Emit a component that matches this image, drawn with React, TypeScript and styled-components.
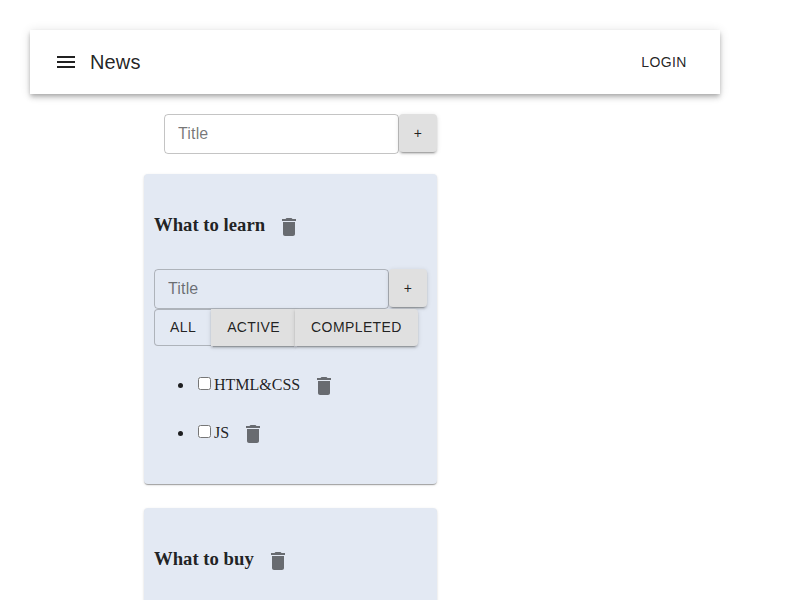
import React from "react";
import styled, { createGlobalStyle } from "styled-components";

const GlobalStyle = createGlobalStyle`
  *, *::before, *::after { box-sizing: border-box; }
  html { -webkit-font-smoothing: antialiased; }
  body {
    margin: 0;
    background: #fff;
    color: rgba(0, 0, 0, 0.87);
    font-family: "Liberation Serif", serif;
    font-size: 16px;
    overflow: hidden;
  }
`;

const Page = styled.div`
  height: 600px;
  padding: 30px 30px 0;
  overflow: hidden;
`;

const AppBar = styled.header`
  display: flex;
  align-items: center;
  width: 690px;
  height: 64px;
  padding: 0 24px;
  background: #fff;
  box-shadow: 0 2px 4px -1px rgba(0, 0, 0, 0.2), 0 4px 5px 0 rgba(0, 0, 0, 0.14),
    0 1px 10px 0 rgba(0, 0, 0, 0.12);
`;

const AppTitle = styled.h6`
  flex: 1;
  margin: 0;
  font: 400 20px/1.6 "Liberation Sans", sans-serif;
  letter-spacing: 0.0075em;
`;

const IconButton = styled.button<{ $edge?: boolean }>`
  display: inline-flex;
  align-items: center;
  justify-content: center;
  vertical-align: middle;
  padding: 12px;
  margin: 0 0 0 ${(p) => (p.$edge ? "-12px" : "0")};
  border: 0;
  background: transparent;
  font-size: 24px;
  color: ${(p) => (p.$edge ? "inherit" : "rgba(0, 0, 0, 0.54)")};
`;

const Icon = styled.svg`
  display: block;
  width: 24px;
  height: 24px;
  fill: currentColor;
`;

const Button = styled.button<{ $variant?: "text" | "contained" | "outlined" }>`
  display: inline-flex;
  align-items: center;
  justify-content: center;
  margin: 0;
  min-width: ${(p) => (p.$variant === "text" ? "64px" : "40px")};
  padding: ${(p) =>
    p.$variant === "text" ? "6px 8px" : p.$variant === "outlined" ? "5px 15px" : "6px 16px"};
  border: ${(p) => (p.$variant === "outlined" ? "1px solid rgba(0, 0, 0, 0.23)" : "0")};
  border-radius: 4px;
  color: rgba(0, 0, 0, 0.87);
  background: ${(p) => (p.$variant === "contained" ? "#e0e0e0" : "transparent")};
  box-shadow: ${(p) =>
    p.$variant === "contained"
      ? "0 3px 1px -2px rgba(0,0,0,.2), 0 2px 2px 0 rgba(0,0,0,.14), 0 1px 5px 0 rgba(0,0,0,.12)"
      : "none"};
  font: 400 14px/1.75 "Liberation Sans", sans-serif;
  letter-spacing: 0.02857em;
  text-transform: uppercase;
`;

const AddButton = styled(Button)`
  width: 38px;
  min-width: 38px;
  height: 38px;
  padding: 6px 0;
`;

const ButtonGroup = styled.div`
  display: flex;

  & > :not(:first-child) {
    margin-left: -1px;
    border-top-left-radius: 0;
    border-bottom-left-radius: 0;
  }
  & > :not(:last-child) {
    border-top-right-radius: 0;
    border-bottom-right-radius: 0;
    border-right-color: transparent;
  }
`;

const AddForm = styled.div`
  display: flex;
  align-items: flex-start;
`;

const TitleInput = styled.input`
  width: 235px;
  height: 40px;
  margin: 0;
  padding: 9.5px 13px;
  border: 1px solid rgba(0, 0, 0, 0.23);
  border-radius: 4px;
  outline: 0;
  background: transparent;
  color: inherit;
  font: 400 16px "Liberation Sans", sans-serif;
  letter-spacing: 0.00938em;

  &::placeholder {
    color: rgba(0, 0, 0, 0.54);
    opacity: 1;
  }
`;

const Content = styled.main`
  width: 293px;
  margin-left: 114px;
  padding-top: 20px;
`;

const NewListRow = styled.div`
  padding: 0 0 20px 20px;
`;

const Lists = styled.div`
  display: flex;
  flex-direction: column;
  gap: 24px;
`;

const Card = styled.section`
  display: flow-root;
  min-height: 310px;
  padding: 10px;
  border-radius: 4px;
  background: #e3e9f3;
  box-shadow: 0 2px 1px -1px rgba(0, 0, 0, 0.2), 0 1px 1px 0 rgba(0, 0, 0, 0.14),
    0 1px 3px 0 rgba(0, 0, 0, 0.12);
`;

const CardTitle = styled.h3`
  margin: 18.72px 0;
  font-size: 18.72px;
  font-weight: 700;
`;

const TaskList = styled.ul`
  margin: 16px 0;
  padding-left: 40px;
`;

const Checkbox = styled.input`
  margin: 3px 3px 3px 4px;
`;

const TrashButton = () => (
  <IconButton aria-label="Delete">
    <Icon viewBox="0 0 24 24">
      <path d="M6 19c0 1.1.9 2 2 2h8c1.1 0 2-.9 2-2V7H6v12zM19 4h-3.5l-1-1h-5l-1 1H5v2h14V4z" />
    </Icon>
  </IconButton>
);

const AddItem = () => (
  <AddForm>
    <TitleInput placeholder="Title" />
    <AddButton $variant="contained">+</AddButton>
  </AddForm>
);

const TodoCard = ({ title, tasks }: { title: string; tasks?: string[] }) => (
  <Card>
    <CardTitle>
      {title}
      <TrashButton />
    </CardTitle>
    {tasks && (
      <>
        <AddItem />
        <ButtonGroup>
          <Button $variant="outlined">All</Button>
          <Button $variant="contained">Active</Button>
          <Button $variant="contained">Completed</Button>
        </ButtonGroup>
        <TaskList>
          {tasks.map((task) => (
            <li key={task}>
              <Checkbox type="checkbox" />
              <span>{task}</span>
              <TrashButton />
            </li>
          ))}
        </TaskList>
      </>
    )}
  </Card>
);

export default function App() {
  return (
    <>
      <GlobalStyle />
      <Page>
        <AppBar>
          <IconButton $edge aria-label="Menu">
            <Icon viewBox="0 0 24 24">
              <path d="M3 18h18v-2H3v2zm0-5h18v-2H3v2zm0-7v2h18V6H3z" />
            </Icon>
          </IconButton>
          <AppTitle>News</AppTitle>
          <Button $variant="text">Login</Button>
        </AppBar>
        <Content>
          <NewListRow>
            <AddItem />
          </NewListRow>
          <Lists>
            <TodoCard title="What to learn" tasks={["HTML&CSS", "JS"]} />
            <TodoCard title="What to buy" />
          </Lists>
        </Content>
      </Page>
    </>
  );
}
